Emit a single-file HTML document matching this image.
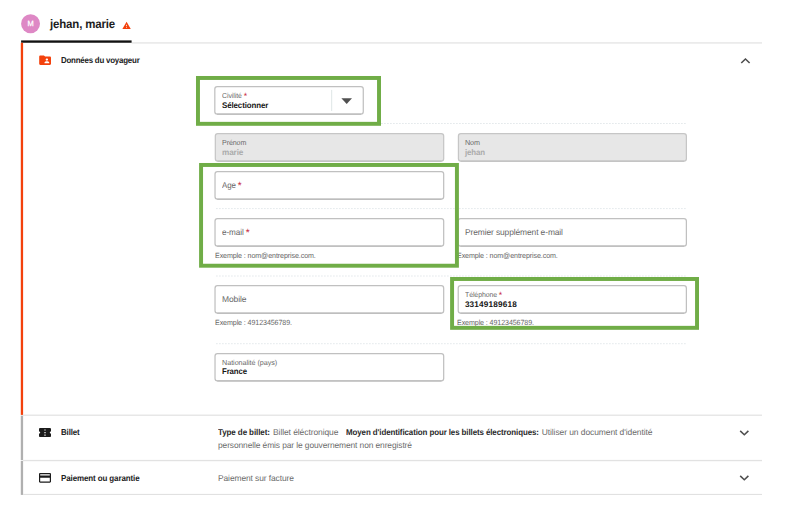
<!DOCTYPE html>
<html lang="fr">
<head>
<meta charset="utf-8">
<title>Données du voyageur</title>
<style>
html,body{margin:0;padding:0;background:#fff;}
body{width:791px;height:517px;position:relative;overflow:hidden;font-family:"Liberation Sans",sans-serif;color:#222;}
.abs{position:absolute;}
.t{position:absolute;white-space:nowrap;line-height:1;text-rendering:geometricPrecision;}
.t b{color:#2a2a2a;}
</style>
</head>
<body>
<!-- header -->
<svg class="abs" style="left:0;top:0" width="791" height="517" viewBox="0 0 791 517"><circle cx="30.55" cy="23.75" r="9.45" fill="#de88c5"/><rect x="131.6" y="42.1" width="630.40" height="1.60" fill="#e9e9e9"/><rect x="21.1" y="40.4" width="110.50" height="2.35" fill="#111"/><rect x="20.8" y="42.8" width="2.30" height="372.10" fill="#f3410c"/><rect x="23.1" y="414.5" width="738.90" height="1.50" fill="#e7e7e7"/><rect x="20.8" y="415.6" width="2.30" height="44.60" fill="#b0b0b0"/><rect x="23.1" y="459.9" width="738.90" height="1.30" fill="#e2e2e2"/><rect x="20.8" y="461.0" width="2.30" height="33.90" fill="#b0b0b0"/><rect x="23.1" y="493.9" width="738.90" height="1.00" fill="#dedede"/><path d="M216.2 123.5 H686.8" stroke="#dfe5e8" stroke-width="1" stroke-dasharray="1.4 1.6" fill="none"/><path d="M216.2 208.6 H686.8" stroke="#dfe5e8" stroke-width="1" stroke-dasharray="1.4 1.6" fill="none"/><path d="M216.2 276.0 H686.8" stroke="#dfe5e8" stroke-width="1" stroke-dasharray="1.4 1.6" fill="none"/><path d="M216.2 343.7 H686.8" stroke="#dfe5e8" stroke-width="1" stroke-dasharray="1.4 1.6" fill="none"/></svg>
<div class="t" style="left:21.1px;top:14.5px;width:18.9px;height:18.9px;line-height:18.9px;text-align:center;color:#fff;font-size:7.5px;-webkit-text-stroke:0.25px #fff;">M</div>
<svg class="abs" style="left:122.3px;top:21.05px" width="9.17" height="9.17" viewBox="0 0 24 24"><path d="M1 21h22L12 2 1 21zm12-3h-2v-2h2v2zm0-4h-2v-4h2v4z" fill="#f3410c"/></svg>

<!-- section 1 head -->
<svg class="abs" style="left:37.85px;top:53.0px" width="14.2" height="14.35" viewBox="0 0 24 24" preserveAspectRatio="none"><path d="M20 6h-8l-2-2H4c-1.1 0-1.99.9-1.99 2L2 18c0 1.100.9 2 2 2h16c1.100 0 2-.9 2-2V8c0-1.100-.9-2-2-2zm-5 3c1.100 0 2 .9 2 2s-.9 2-2 2-2-.9-2-2 .9-2 2-2zm4 8h-8v-1c0-1.330 2.670-2 4-2s4 .67 4 2v1z" fill="#f3410c"/></svg>
<svg class="abs" style="left:735.55px;top:51.6px" width="18.9" height="17.8" viewBox="0 0 24 24" preserveAspectRatio="none"><path d="M12 8l-6 6 1.410 1.410L12 10.830l4.590 4.580L18 14z" fill="#4e4e4e"/></svg>

<!-- dotted separators -->

<!-- field boxes -->
<svg class="abs" style="left:0;top:0" width="791" height="517" viewBox="0 0 791 517"><rect x="214.82" y="86.62" width="148.45" height="27.45" rx="2.4" fill="#fff" stroke="#c0c0c0" stroke-width="1.25"/><path d="M217.02 114.08 H361.07" stroke="#b2b2b2" stroke-width="0.9" fill="none"/><rect x="215.33" y="133.72" width="228.35" height="27.45" rx="2.4" fill="#e7e7e7" stroke="#c6c6c6" stroke-width="1.25"/><path d="M217.53 161.17 H441.48" stroke="#bababa" stroke-width="0.9" fill="none"/><rect x="458.43" y="133.72" width="227.95" height="27.45" rx="2.4" fill="#e7e7e7" stroke="#c6c6c6" stroke-width="1.25"/><path d="M460.62 161.17 H684.17" stroke="#bababa" stroke-width="0.9" fill="none"/><rect x="215.03" y="171.72" width="228.65" height="27.45" rx="2.4" fill="#fff" stroke="#c0c0c0" stroke-width="1.25"/><path d="M217.22 199.17 H441.48" stroke="#b2b2b2" stroke-width="0.9" fill="none"/><rect x="215.03" y="218.62" width="228.65" height="27.45" rx="2.4" fill="#fff" stroke="#c0c0c0" stroke-width="1.25"/><path d="M217.22 246.07 H441.48" stroke="#b2b2b2" stroke-width="0.9" fill="none"/><rect x="458.23" y="218.62" width="228.15" height="27.45" rx="2.4" fill="#fff" stroke="#c0c0c0" stroke-width="1.25"/><path d="M460.43 246.07 H684.17" stroke="#b2b2b2" stroke-width="0.9" fill="none"/><rect x="215.03" y="285.73" width="228.65" height="27.45" rx="2.4" fill="#fff" stroke="#c0c0c0" stroke-width="1.25"/><path d="M217.22 313.18 H441.48" stroke="#b2b2b2" stroke-width="0.9" fill="none"/><rect x="458.23" y="285.73" width="228.15" height="27.45" rx="2.4" fill="#fff" stroke="#c0c0c0" stroke-width="1.25"/><path d="M460.43 313.18 H684.17" stroke="#b2b2b2" stroke-width="0.9" fill="none"/><rect x="215.03" y="353.52" width="228.65" height="27.45" rx="2.4" fill="#fff" stroke="#c0c0c0" stroke-width="1.25"/><path d="M217.22 380.97 H441.48" stroke="#b2b2b2" stroke-width="0.9" fill="none"/><rect x="331.1" y="89.9" width="1.10" height="21.10" fill="#e2e8e8"/></svg>
<svg class="abs" style="left:334.4px;top:86.7px" width="25.4" height="27" viewBox="0 0 24 24" preserveAspectRatio="none"><path d="M7 10l5 5 5-5z" fill="#505050"/></svg>

<!-- texts -->
<div class="t" style="left:49.8px;top:18.00px;font-size:12.3px;font-weight:bold;color:#1c1c1c;letter-spacing:-0.161px;transform:scaleX(0.9307);transform-origin:0 0;">jehan, marie</div>
<div class="t" style="left:61.1px;top:56.00px;font-size:8.6px;font-weight:bold;color:#222;letter-spacing:-0.234px;transform:scaleX(0.9200);transform-origin:0 0;">Données du voyageur</div>
<div class="t" style="left:61.1px;top:428.00px;font-size:8.6px;font-weight:bold;color:#222;letter-spacing:-0.133px;transform:scaleX(0.9200);transform-origin:0 0;">Billet</div>
<div class="t" style="left:61.1px;top:474.00px;font-size:8.6px;font-weight:bold;color:#222;letter-spacing:-0.117px;transform:scaleX(0.9281);transform-origin:0 0;">Paiement ou garantie</div>
<div class="t" style="left:221.9px;top:92.00px;font-size:7.2px;font-weight:normal;color:#6a6a6a;letter-spacing:-0.069px;transform:scaleX(0.9618);transform-origin:0 0;">Civilité <span style="color:#c7263b;font-size:1.25em;line-height:0;position:relative;top:0.1em;margin-left:0">*</span></div>
<div class="t" style="left:221.9px;top:102.00px;font-size:8.2px;font-weight:bold;color:#161616;letter-spacing:-0.106px;transform:scaleX(0.9649);transform-origin:0 0;">Sélectionner</div>
<div class="t" style="left:221.9px;top:139.00px;font-size:7.2px;font-weight:normal;color:#6a6a6a;letter-spacing:-0.106px;transform:scaleX(0.9904);transform-origin:0 0;">Prénom</div>
<div class="t" style="left:221.9px;top:149.00px;font-size:8.2px;font-weight:bold;color:#ababab;letter-spacing:-0.109px;transform:scaleX(0.9994);transform-origin:0 0;">marie</div>
<div class="t" style="left:464.9px;top:139.00px;font-size:7.2px;font-weight:normal;color:#6a6a6a;letter-spacing:-0.062px;">Nom</div>
<div class="t" style="left:464.9px;top:149.00px;font-size:8.2px;font-weight:bold;color:#ababab;letter-spacing:-0.111px;transform:scaleX(0.9600);transform-origin:0 0;">jehan</div>
<div class="t" style="left:221.9px;top:181.00px;font-size:8.5px;font-weight:normal;color:#666;letter-spacing:-0.116px;transform:scaleX(0.9307);transform-origin:0 0;">Age <span style="color:#c7263b;font-size:1.25em;line-height:0;position:relative;top:0.12em;margin-left:0">*</span></div>
<div class="t" style="left:221.9px;top:228.00px;font-size:8.5px;font-weight:normal;color:#666;letter-spacing:-0.097px;transform:scaleX(0.9590);transform-origin:0 0;">e-mail <span style="color:#c7263b;font-size:1.25em;line-height:0;position:relative;top:0.12em;margin-left:0">*</span></div>
<div class="t" style="left:464.9px;top:228.00px;font-size:8.5px;font-weight:normal;color:#666;letter-spacing:-0.103px;transform:scaleX(0.9888);transform-origin:0 0;">Premier supplément e-mail</div>
<div class="t" style="left:214.8px;top:252.00px;font-size:7.5px;font-weight:normal;color:#666;letter-spacing:-0.100px;transform:scaleX(0.9461);transform-origin:0 0;">Exemple : nom@entreprise.com.</div>
<div class="t" style="left:457.4px;top:252.00px;font-size:7.5px;font-weight:normal;color:#666;letter-spacing:-0.100px;transform:scaleX(0.9461);transform-origin:0 0;">Exemple : nom@entreprise.com.</div>
<div class="t" style="left:221.9px;top:295.00px;font-size:8.5px;font-weight:normal;color:#666;letter-spacing:-0.105px;transform:scaleX(0.9952);transform-origin:0 0;">Mobile</div>
<div class="t" style="left:214.8px;top:319.00px;font-size:7.5px;font-weight:normal;color:#666;letter-spacing:-0.100px;transform:scaleX(0.9470);transform-origin:0 0;">Exemple : 49123456789.</div>
<div class="t" style="left:464.9px;top:291.00px;font-size:7.2px;font-weight:normal;color:#6a6a6a;letter-spacing:-0.093px;transform:scaleX(0.9646);transform-origin:0 0;">Téléphone <span style="color:#c7263b;font-size:1.25em;line-height:0;position:relative;top:0.1em;margin-left:0">*</span></div>
<div class="t" style="left:464.9px;top:301.00px;font-size:8.2px;font-weight:bold;color:#161616;letter-spacing:0.173px;">33149189618</div>
<div class="t" style="left:457.4px;top:319.00px;font-size:7.5px;font-weight:normal;color:#666;letter-spacing:-0.100px;transform:scaleX(0.9470);transform-origin:0 0;">Exemple : 49123456789.</div>
<div class="t" style="left:222.1px;top:359.00px;font-size:7.2px;font-weight:normal;color:#6a6a6a;letter-spacing:-0.052px;">Nationalité (pays)</div>
<div class="t" style="left:222.1px;top:368.00px;font-size:8.2px;font-weight:bold;color:#161616;letter-spacing:-0.117px;transform:scaleX(0.9558);transform-origin:0 0;">France</div>
<div class="t" style="left:218.3px;top:428.00px;font-size:8.5px;font-weight:bold;color:#2a2a2a;letter-spacing:-0.100px;transform:scaleX(0.9413);transform-origin:0 0;">Type de billet:</div>
<div class="t" style="left:272.9px;top:428.00px;font-size:8.5px;font-weight:normal;color:#6b6b6b;letter-spacing:-0.088px;transform:scaleX(0.9995);transform-origin:0 0;">Billet éléctronique</div>
<div class="t" style="left:346.4px;top:428.00px;font-size:8.5px;font-weight:bold;color:#2a2a2a;letter-spacing:-0.105px;transform:scaleX(0.9336);transform-origin:0 0;">Moyen d'identification pour les billets électroniques:</div>
<div class="t" style="left:541.7px;top:428.00px;font-size:8.5px;font-weight:normal;color:#6b6b6b;letter-spacing:-0.091px;">Utiliser un document d'identité</div>
<div class="t" style="left:218.3px;top:441.00px;font-size:8.5px;font-weight:normal;color:#6b6b6b;letter-spacing:-0.100px;transform:scaleX(0.9883);transform-origin:0 0;">personnelle émis par le gouvernement non enregistré</div>
<div class="t" style="left:218.3px;top:474.00px;font-size:8.5px;font-weight:normal;color:#6b6b6b;letter-spacing:-0.099px;transform:scaleX(0.9926);transform-origin:0 0;">Paiement sur facture</div>

<!-- green highlight rectangles -->
<svg class="abs" style="left:0;top:0" width="791" height="517" viewBox="0 0 791 517"><rect x="197.97" y="77.97" width="181.05" height="45.85" fill="none" stroke="#70ad47" stroke-width="3.95"/><rect x="201.07" y="164.97" width="255.85" height="100.75" fill="none" stroke="#70ad47" stroke-width="3.95"/><rect x="452.08" y="278.98" width="244.95" height="48.85" fill="none" stroke="#70ad47" stroke-width="3.95"/></svg>

<!-- section 2 / 3 chrome -->
<svg class="abs" style="left:38.96px;top:427.8px" width="12" height="9.2" viewBox="2 4 20 16" preserveAspectRatio="none"><path d="M22 10V6c0-1.110-.9-2-2-2H4c-1.100 0-1.990.89-1.990 2v4c1.100 0 1.990.9 1.990 2s-.89 2-2 2v4c0 1.100.9 2 2 2h16c1.100 0 2-.9 2-2v-4c-1.100 0-2-.9-2-2s.9-2 2-2zm-9 7.500h-2v-2h2v2zm0-4.500h-2v-2h2v2zm0-4.500h-2v-2h2v2z" fill="#1b1b1b"/></svg>
<svg class="abs" style="left:735.05px;top:423.6px" width="18.6" height="17.8" viewBox="0 0 24 24" preserveAspectRatio="none"><path d="M16.590 8.590L12 13.170 7.410 8.590 6 10l6 6 6-6z" fill="#4e4e4e"/></svg>

<svg class="abs" style="left:38.96px;top:473px" width="12" height="9.7" viewBox="2 4 20 16" preserveAspectRatio="none"><path d="M20 4H4c-1.110 0-1.990.89-1.990 2L2 18c0 1.110.89 2 2 2h16c1.110 0 2-.89 2-2V6c0-1.110-.89-2-2-2zm0 14H4v-6h16v6zm0-10H4V6h16v2z" fill="#1b1b1b"/></svg>
<svg class="abs" style="left:735.05px;top:468.9px" width="18.6" height="17.8" viewBox="0 0 24 24" preserveAspectRatio="none"><path d="M16.590 8.590L12 13.170 7.410 8.590 6 10l6 6 6-6z" fill="#4e4e4e"/></svg>

</body>
</html>
